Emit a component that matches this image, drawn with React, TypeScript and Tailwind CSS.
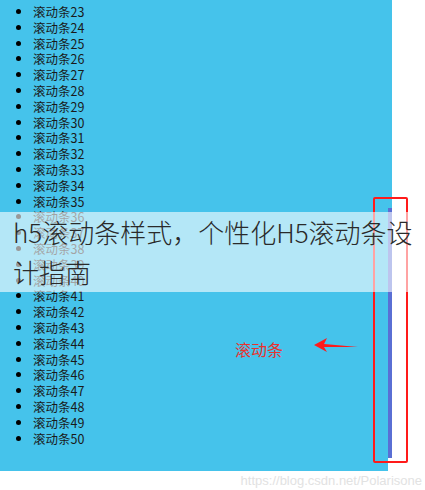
import React from "react";

const items = Array.from({ length: 28 }, (_, i) => i + 23);

export default function App() {
  return (
    <div className="relative w-[425px] h-[490px] bg-white overflow-hidden font-['Noto_Sans_CJK_SC','Noto_Sans',sans-serif]">
      {/* scroll panel */}
      <div className="flex w-[392px] h-[471px]">
        <div className="w-[388px] h-full bg-[#45c3eb]">
          <ul className="list-disc pl-[33px] pt-[4px] text-[12.5px] leading-[15.8px] text-[#1a1a1a]">
            {items.map((n) => (
              <li key={n} className="marker:text-black">
                滚动条{n}
              </li>
            ))}
          </ul>
        </div>
        <div className="flex flex-col w-[4px] h-full">
          <div className="h-[208px] bg-[#45c3eb]" />
          <div className="h-[250px] bg-[#5a6fd4]" />
          <div className="flex-1 bg-white" />
        </div>
      </div>

      {/* annotations */}
      <div className="absolute left-[373px] top-[197px] w-[35px] h-[266px] border-2 border-[#ff1a1a] rounded-[2px]" />
      <div className="absolute left-[235px] top-[338px] text-[16px] leading-[22px] text-[#e8322e]">
        滚动条
      </div>
      <svg className="absolute left-[313px] top-[337px]" width="46" height="16" viewBox="0 0 46 16">
        <path d="M1 8 L14 1 L11 7 L45 10 L11 10 L14 15 Z" fill="#ff1a1a" />
      </svg>

      {/* title banner */}
      <div className="absolute left-0 top-[212px] w-[425px] h-[80px] bg-white/60 pl-[13px] text-[26px] leading-[40px] font-light text-[#2a2a2a]">
        h5滚动条样式，个性化H5滚动条设计指南
      </div>

      <div className="absolute right-[3px] top-[472px] text-[13px] leading-[18px] text-[#e2e2e2] font-['Liberation_Sans',sans-serif]">
        https://blog.csdn.net/Polarisone
      </div>
    </div>
  );
}
